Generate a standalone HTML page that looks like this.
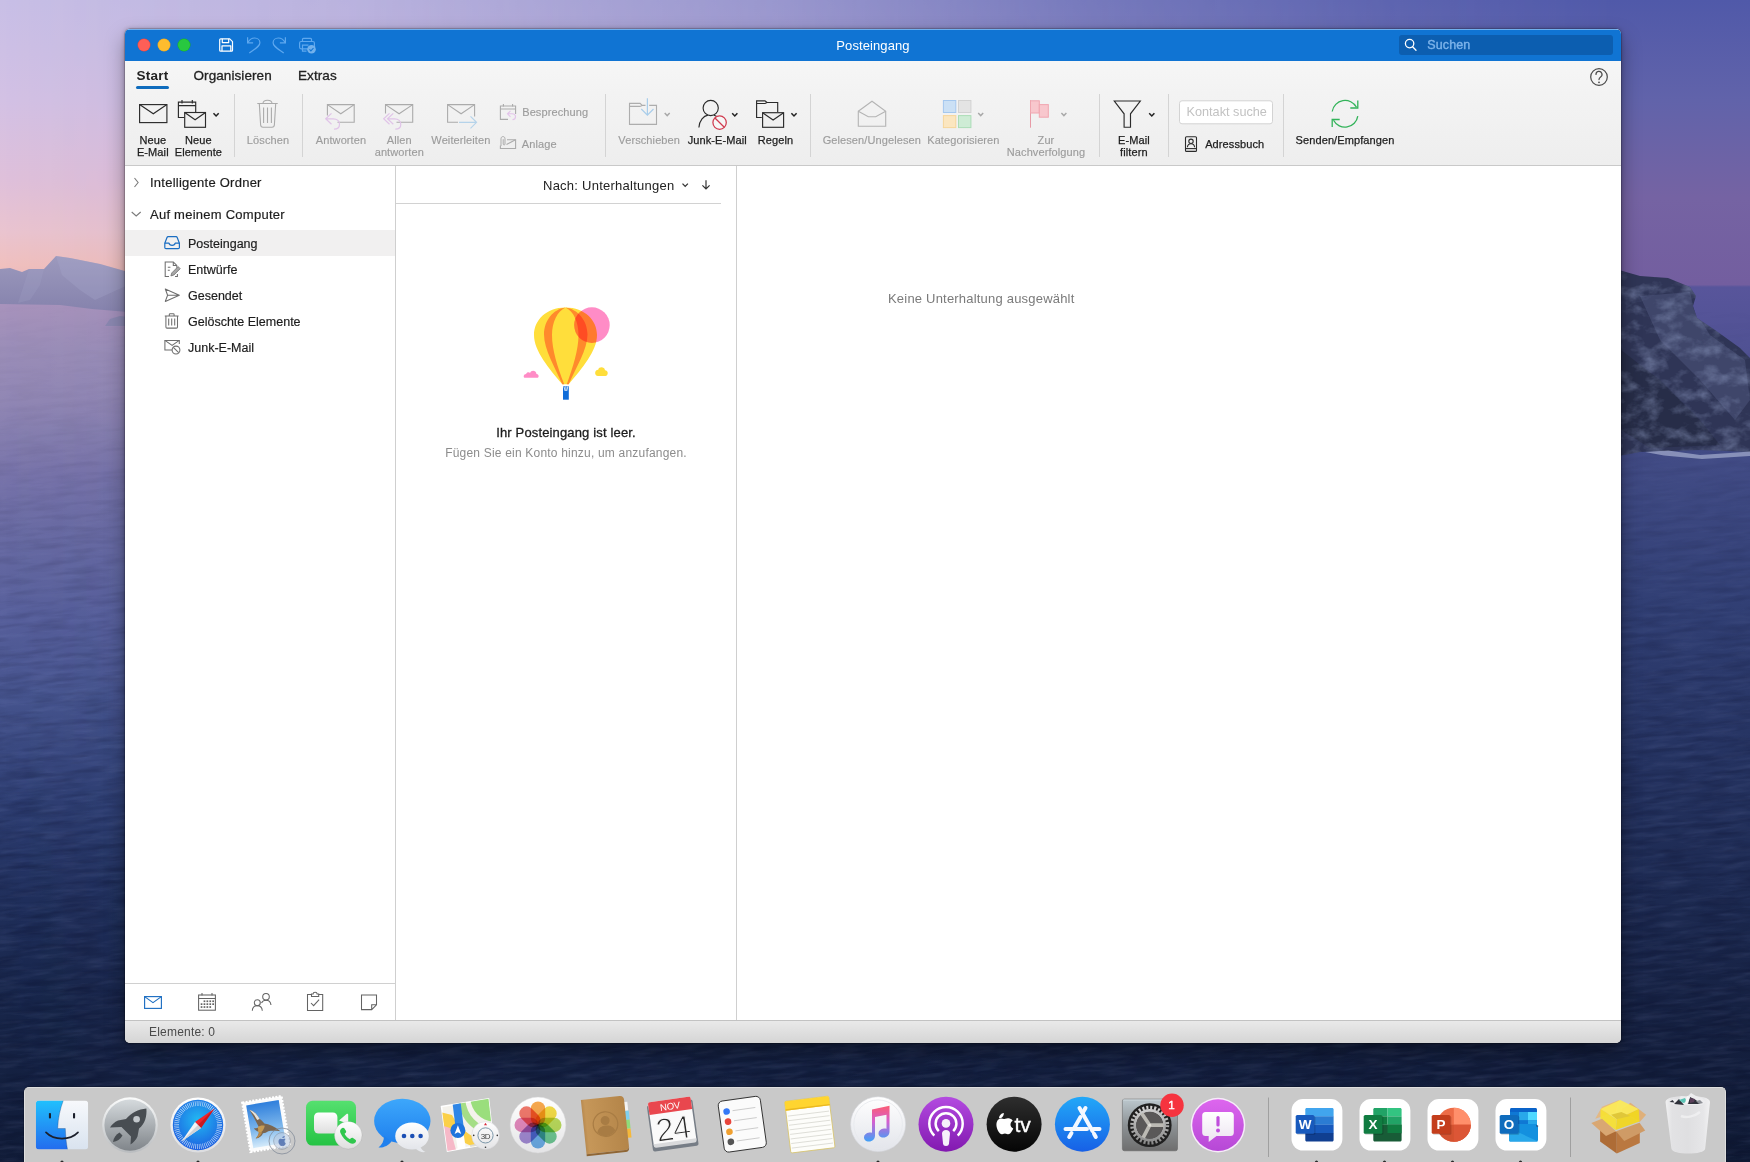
<!DOCTYPE html>
<html><head><meta charset="utf-8">
<style>
*{box-sizing:border-box;margin:0;padding:0}
html,body{width:1750px;height:1162px;overflow:hidden;background:#1a2450}
body{position:relative;font-family:"Liberation Sans",sans-serif;color:#1f1f1f;-webkit-font-smoothing:antialiased}
.abs{position:absolute}
#wall{position:absolute;left:0;top:0}
#win{position:absolute;left:125px;top:29px;width:1496px;height:1014px;border-radius:5px;background:#fff;overflow:hidden;box-shadow:0 0 0 .5px rgba(0,0,0,.3),0 9px 20px rgba(0,0,0,.36),0 0 4px rgba(0,0,0,.3)}
#title{position:absolute;left:0;top:0;width:100%;height:31.5px;background:#1074d3;border-top:1px solid #6fb0ee}
#title .t{position:absolute;left:0;right:0;top:7.6px;text-align:center;color:#fff;font-size:13px;letter-spacing:.1px}
.tl{position:absolute;top:8.6px;width:12px;height:12px;border-radius:50%}
#search{position:absolute;left:1274px;top:5px;width:214px;height:20px;border-radius:3px;background:#0c5eb0}
#search span{position:absolute;left:28.3px;top:2.5px;font-size:12.5px;color:#7cb3ea;-webkit-text-stroke:.4px #7cb3ea;letter-spacing:.1px}
#ribbon{position:absolute;left:0;top:31.5px;width:100%;height:105px;background:linear-gradient(#f6f6f6,#f3f3f3 30%,#eeeeee);border-bottom:1px solid #c9c9c9}
.tab{position:absolute;top:8px;font-size:13.5px;color:#222;letter-spacing:.08px;-webkit-text-stroke:.3px #222}
.rl{position:absolute;letter-spacing:.1px;font-size:11px;line-height:12px;text-align:center;white-space:nowrap;color:#1d1d1d;transform:translateX(-50%);-webkit-text-stroke:.25px currentColor}
.rl.d{color:#9c9c9c;-webkit-text-stroke:.15px currentColor}
.sep{position:absolute;top:65px;width:1px;height:63px;background:#d6d6d6}
#side{position:absolute;left:0;top:137px;width:270.5px;height:854px;background:#fff;border-right:1px solid #cfcfcf}
#list{position:absolute;left:271px;top:137px;width:340.5px;height:854px;border-right:1px solid #cfcfcf;background:#fff}
#status{position:absolute;left:0;top:991px;width:100%;height:23px;background:linear-gradient(#e9e9e9,#d5d5d5);border-top:1px solid #c2c2c2}
#status span{position:absolute;left:24px;top:4px;font-size:12px;color:#4a4a4a;letter-spacing:.2px}
.fi{position:absolute;left:63px;font-size:12.5px;color:#1d1d1d;white-space:nowrap;-webkit-text-stroke:.18px #1d1d1d}
.fh{position:absolute;left:25px;font-size:13px;color:#1d1d1d;white-space:nowrap;letter-spacing:.25px;-webkit-text-stroke:.18px #1d1d1d}
#dock{position:absolute;left:24px;top:1087px;width:1702px;height:80px;border-radius:5px 5px 0 0;background:#c9c9c9;border:1px solid #dedede;border-bottom:none;box-shadow:0 0 0 .5px rgba(0,0,0,.35)}
.pet rect{mix-blend-mode:multiply;opacity:.9}
#dk{isolation:isolate}
#ov,#ov2,#title,#status{will-change:transform}
</style></head>
<body>
<svg id="wall" width="1750" height="1162" viewBox="0 0 1750 1162">
<defs>
<linearGradient id="gL" x1="0" y1="0" x2="0" y2="1162" gradientUnits="userSpaceOnUse">
<stop offset="0" stop-color="#c8bfe6"/><stop offset=".086" stop-color="#d3c1e4"/><stop offset=".155" stop-color="#dfc0da"/><stop offset=".2" stop-color="#eac4cf"/><stop offset=".228" stop-color="#f0c0be"/><stop offset=".25" stop-color="#e9b5bd"/>
<stop offset=".262" stop-color="#a893bc"/><stop offset=".3" stop-color="#9b8eb8"/><stop offset=".345" stop-color="#9187b4"/><stop offset=".41" stop-color="#7773a9"/><stop offset=".47" stop-color="#6669a2"/><stop offset=".53" stop-color="#575f9b"/><stop offset=".6" stop-color="#46548e"/><stop offset=".69" stop-color="#2e3e72"/><stop offset=".775" stop-color="#202f5b"/><stop offset=".86" stop-color="#18264a"/><stop offset="1" stop-color="#111c38"/>
</linearGradient>
<linearGradient id="gR" x1="0" y1="0" x2="0" y2="1162" gradientUnits="userSpaceOnUse">
<stop offset="0" stop-color="#5059a9"/><stop offset=".086" stop-color="#6163aa"/><stop offset=".17" stop-color="#7563a3"/><stop offset=".245" stop-color="#735e9f"/>
<stop offset=".247" stop-color="#58559b"/><stop offset=".4" stop-color="#414b85"/><stop offset=".52" stop-color="#313f74"/><stop offset=".65" stop-color="#253361"/><stop offset=".775" stop-color="#1c2950"/><stop offset=".9" stop-color="#141f3e"/><stop offset="1" stop-color="#0f1a34"/>
</linearGradient>
<linearGradient id="gH" x1="0" y1="0" x2="1750" y2="0" gradientUnits="userSpaceOnUse">
<stop offset="0" stop-color="#fff" stop-opacity="0"/><stop offset=".2" stop-color="#fff" stop-opacity=".12"/><stop offset=".45" stop-color="#fff" stop-opacity=".4"/><stop offset=".62" stop-color="#fff" stop-opacity=".68"/><stop offset=".8" stop-color="#fff" stop-opacity=".9"/><stop offset=".92" stop-color="#fff" stop-opacity="1"/>
</linearGradient>
<linearGradient id="gW" x1="0" y1="300" x2="0" y2="1162" gradientUnits="userSpaceOnUse"><stop offset="0" stop-color="#fff" stop-opacity="0"/><stop offset=".12" stop-color="#fff" stop-opacity=".15"/><stop offset=".5" stop-color="#fff" stop-opacity=".8"/><stop offset="1" stop-color="#fff" stop-opacity="1"/></linearGradient><mask id="mW"><rect y="300" width="1750" height="862" fill="url(#gW)"/></mask>
<mask id="mH"><rect width="1750" height="1162" fill="url(#gH)"/></mask>
<linearGradient id="gM" x1="0" y1="256" x2="0" y2="310" gradientUnits="userSpaceOnUse"><stop offset="0" stop-color="#9c99bd"/><stop offset="1" stop-color="#8683ad"/></linearGradient>
<filter id="waves" x="0" y="0" width="100%" height="100%" color-interpolation-filters="sRGB"><feTurbulence type="fractalNoise" baseFrequency="0.03 0.22" numOctaves="3" seed="7"/><feColorMatrix type="matrix" values="0 0 0 0 .75  0 0 0 0 .8  0 0 0 0 1  1.6 0 0 0 -0.68"/></filter>
<filter id="wavesd" x="0" y="0" width="100%" height="100%" color-interpolation-filters="sRGB"><feTurbulence type="fractalNoise" baseFrequency="0.025 0.18" numOctaves="3" seed="23"/><feColorMatrix type="matrix" values="0 0 0 0 0  0 0 0 0 0  0 0 0 0 .1  1.6 0 0 0 -0.68"/></filter>
<filter id="rock" x="0" y="0" width="100%" height="100%" color-interpolation-filters="sRGB"><feTurbulence type="fractalNoise" baseFrequency="0.05 0.07" numOctaves="4" seed="11"/><feColorMatrix type="matrix" values="0 0 0 0 .55  0 0 0 0 .6  0 0 0 0 .75  2.2 0 0 0 -0.95"/><feComposite in2="SourceGraphic" operator="in"/></filter>
<clipPath id="cliffc"><path d="M1619 270 L1640 276 L1668 278 L1690 287 L1696 296 L1693 306 L1697 318 L1715 330 L1740 348 L1750 358 L1750 452 L1700 450 L1640 452 L1619 456Z"/></clipPath>
</defs>
<rect width="1750" height="1162" fill="url(#gL)"/>
<rect width="1750" height="1162" fill="url(#gR)" mask="url(#mH)"/>
<g mask="url(#mW)"><rect x="-100" y="220" width="1950" height="1060" filter="url(#waves)" opacity=".13" transform="rotate(-5 875 700)"/>
<rect x="-100" y="220" width="1950" height="1060" filter="url(#wavesd)" opacity=".32" transform="rotate(-5 875 700)"/></g>
<path d="M0 269 L10 268 L22 272 L29 269 L44 269 L56 256 L70 258 L100 264 L128 272 L128 312 L92 309 L60 305 L0 304Z" fill="url(#gM)"/>
<path d="M56 256 L70 258 L100 264 L128 272 L128 285 L95 300 L80 290 L62 275Z" fill="#aaa8cc" opacity=".3"/>
<path d="M29 269 L44 269 L40 285 L30 300 L18 303Z" fill="#aaa8cc" opacity=".2"/>
<path d="M105 326 L110 319 L120 316 L128 317 L128 326Z" fill="#8a87b0"/>
<path d="M1619 270 L1640 276 L1668 278 L1690 287 L1696 296 L1693 306 L1697 318 L1715 330 L1740 348 L1750 358 L1750 452 L1700 450 L1640 452 L1619 456Z" fill="#2f3556"/>
<g clip-path="url(#cliffc)"><path d="M1640 296 L1690 292 L1694 310 L1710 335 L1745 360 L1750 400 L1735 420 L1700 380 L1660 340Z" fill="#4f577e" opacity=".5"/>
<path d="M1621 350 L1660 380 L1700 420 L1720 445 L1650 448 L1621 430Z" fill="#23283f" opacity=".6"/>
<rect x="1619" y="268" width="131" height="190" fill="#fff" filter="url(#rock)" opacity=".55"/></g>
<path d="M1645 452 L1668 450.500 L1700 455 L1730 453 L1750 451.500 L1750 456 L1702 459 L1664 455.500Z" fill="#b7bfdc" opacity=".6"/>
</svg>

<div id="win">
 <div id="title">
  <div class="tl" style="left:13px;background:#fe5f57;box-shadow:0 0 0 .5px #e0443e"></div>
  <div class="tl" style="left:33px;background:#febc2e;box-shadow:0 0 0 .5px #dea123"></div>
  <div class="tl" style="left:53px;background:#28c840;box-shadow:0 0 0 .5px #1aab29"></div>
  
  <div class="t">Posteingang</div>
  <div id="search"><span>Suchen</span></div>
 </div>
 <div id="ribbon">
  
 </div>
 <div id="side"></div>
 <div id="list"></div>
 <div id="ov" style="position:absolute;left:-125px;top:-29px;width:1750px;height:1162px;pointer-events:none">
<svg class="abs" style="left:0;top:0" width="1750" height="1162" viewBox="0 0 1750 1162" fill="none" stroke-linecap="butt" stroke-linejoin="miter">
<!-- tabs underline -->
<rect x="136" y="86" width="33" height="3" rx="1.5" fill="#0f6cbd"/>
<!-- help -->
<g stroke="#4a4a4a" stroke-width="1.2"><circle cx="1599" cy="77" r="8.3"/><path d="M1596 74.5a3 3 0 1 1 4.6 2.4c-1.2.8-1.6 1.4-1.6 2.7" stroke-linecap="round"/></g><circle cx="1599" cy="82.3" r=".9" fill="#4a4a4a"/>
<!-- separators -->
<g stroke="#d4d4d4" stroke-width="1"><path d="M234.5 94v63M302.5 94v63M605.5 94v63M810.5 94v63M1099.5 94v63M1168.5 94v63M1283.5 94v63"/></g>
<!-- Neue E-Mail -->
<g stroke="#2b2b2b" stroke-width="1.15"><rect x="139.6" y="104.6" width="27.3" height="18"/><path d="M139.6 104.6l13.7 9.2 13.6-9.2"/></g>
<!-- Neue Elemente -->
<g stroke="#2b2b2b" stroke-width="1.15"><path d="M184.3 117.5h-5.9v-15.4h17.3v10"/><path d="M178.4 105.6h17.3M182 100v3.6M192.3 100v3.6"/><rect x="184.7" y="112.5" width="20.8" height="14.8" fill="#f0f0f0"/><path d="M184.7 112.5l10.4 7.3 10.4-7.3"/></g>
<path d="M213.5 113.2l2.6 2.8 2.6-2.8" stroke="#222" stroke-width="1.5"/>
<!-- Loeschen -->
<g stroke="#ababab" stroke-width="1.1"><path d="M257.3 103.5h20.4M263 103.5c0-2 1.4-3.3 4.5-3.3s4.5 1.3 4.5 3.3"/><path d="M259.3 103.5l1.3 21.3c.1 1.6.9 2.4 2.4 2.4h9c1.500 0 2.300-.8 2.400-2.400l1.300-21.300"/><path d="M263.600 107.500v15.500M267.500 107.500v15.500M271.400 107.500v15.500"/></g>
<!-- Antworten -->
<g stroke="#ababab" stroke-width="1.1"><path d="M337.500 122.200h16.700v-17.600h-26.800v11"/><path d="M327.400 104.600l13.400 9.200 13.400-9.200"/></g>
<path d="M331.500 113.400l-5.800 5.400 5.800 5.400M325.700 118.800h7.500c4.200 0 6.300 2.600 6.300 5.400 0 3.200-2.500 5-5.500 5" stroke="#e0c4e8" stroke-width="1.2"/>
<!-- Allen antworten -->
<g stroke="#ababab" stroke-width="1.1"><path d="M396.500 122.200h16.200v-17.600h-27.200v9"/><path d="M385.500 104.600l13.600 9.200 13.600-9.200"/></g>
<path d="M389.500 113.400l-5.800 5.400 5.800 5.400M393.300 113.400l-5.800 5.400 5.800 5.400M387.500 118.800h7.000c4.200 0 6.300 2.600 6.300 5.400 0 3.200-2.500 5-5.500 5" stroke="#e0c4e8" stroke-width="1.2"/>
<!-- Weiterleiten -->
<g stroke="#ababab" stroke-width="1.1"><path d="M458 122.200h-10.400v-17.600h27v12"/><path d="M447.600 104.600l13.500 9.200 13.500-9.200"/></g>
<path d="M459 122.300h17.500M470.500 116.300l6 6-6 6" stroke="#b5d3ea" stroke-width="1.2"/>
<!-- Besprechung -->
<g stroke="#ababab" stroke-width="1.1"><path d="M508 119.400h-7.600v-13.400h15.200v8"/><path d="M500.400 109h15.200M503.400 104v2.600M512.600 104v2.600"/></g>
<path d="M510.500 110.800l-3 3 3 3M507.500 113.800h4.500c2.200 0 3.500 1.300 3.500 3 0 1.800-1.300 2.800-3 2.800" stroke="#e3c3ea" stroke-width="1.1"/>
<!-- Anlage -->
<g stroke="#ababab" stroke-width="1.1"><path d="M507 139.700h8.600v8.800h-15.200v-3"/><path d="M506.500 144.500l9-4.700"/><path d="M501 146v-7.200c0-1.400.8-2.200 2-2.200s2 .8 2 2.200v5.200c0 .6-.4 1-.9 1s-.9-.4-.9-1v-4.800" stroke-width="1"/></g>
<!-- Verschieben -->
<g stroke="#adadad" stroke-width="1.1"><path d="M645.500 105.400h-3.300l-2.100-2h-10.600v21h27v-19h-7.300"/><path d="M629.500 106.400h10.400l2.300-1"/></g>
<path d="M647.400 98.200v16.600M641.300 109l6.100 6.100 6.100-6.100" stroke="#a9cdea" stroke-width="1.2"/>
<path d="M664.700 112.900l2.500 2.700 2.500-2.700" stroke="#a8a8a8" stroke-width="1.4"/>
<!-- Junk -->
<g stroke="#2b2b2b" stroke-width="1.15"><circle cx="710.700" cy="108" r="7.600"/><path d="M698.900 127.500c.5-7.500 4.800-11.600 9-12.400M714 115.300c.9.200 1.800.6 2.600 1.100"/></g>
<g stroke="#d03a4e" stroke-width="1.25"><circle cx="719.600" cy="122.600" r="6.700" fill="#f6f6f6"/><path d="M714.700 117.700l9.600 9.600"/></g>
<path d="M732.200 113.200l2.600 2.800 2.600-2.800" stroke="#222" stroke-width="1.5"/>
<!-- Regeln -->
<g stroke="#2b2b2b" stroke-width="1.15"><path d="M761.800 117.500h-5.200v-16.700h8.400l2 1.700h10.700v9.500"/><path d="M756.600 103.500h8.400l2-1"/><rect x="762.600" y="112.700" width="21" height="14.600" fill="#f0f0f0"/><path d="M762.600 112.700l10.500 7.300 10.500-7.300"/></g>
<path d="M791.400 113.200l2.600 2.800 2.600-2.800" stroke="#222" stroke-width="1.5"/>
<!-- Gelesen -->
<g stroke="#b4b4b4" stroke-width="1.1"><path d="M858.300 111.300l13.700-10 13.700 10v15h-27.400z"/><path d="M858.300 111.300l10 5.500h7.400l10-5.500"/></g>
<!-- Kategorisieren -->
<rect x="943.400" y="100.500" width="12.400" height="12" fill="#cbe0f5" stroke="#a4c7ee"/><rect x="958.500" y="100.500" width="12.400" height="12" fill="#e4e4e4" stroke="#d2d2d2"/><rect x="943.400" y="115.600" width="12.400" height="12" fill="#fbe6c0" stroke="#f6d59b"/><rect x="958.500" y="115.600" width="12.400" height="12" fill="#ceecd5" stroke="#abdcb6"/>
<path d="M978.200 112.900l2.500 2.700 2.500-2.700" stroke="#a8a8a8" stroke-width="1.400"/>
<!-- Flag -->
<path d="M1030.500 100.300v27.400" stroke="#e79aa6" stroke-width="1"/><rect x="1030.500" y="100.800" width="8.800" height="12.200" fill="#f8c7cd" stroke="#f0a6b0"/><rect x="1039.300" y="104.600" width="9" height="12.600" fill="#f8c7cd" stroke="#f0a6b0"/>
<path d="M1061.400 112.900l2.500 2.700 2.500-2.700" stroke="#a8a8a8" stroke-width="1.400"/>
<!-- Filter -->
<path d="M1114.300 101h26l-9.800 12.800v13.400h-6.400v-13.400z" stroke="#2b2b2b" stroke-width="1.150"/>
<path d="M1149.200 113.200l2.600 2.800 2.600-2.800" stroke="#222" stroke-width="1.500"/>
<!-- Kontakt suche box -->
<rect x="1179.500" y="100.800" width="93" height="23" rx="2.500" fill="#fff" stroke="#d3d3d3"/>
<!-- Adressbuch -->
<g stroke="#2b2b2b" stroke-width="1.100"><rect x="1185.500" y="136.800" width="11" height="14.600" rx="1"/><path d="M1185.500 148.600h11"/><circle cx="1191" cy="141.300" r="2.200"/><path d="M1187.400 147.300c.2-2.400 1.700-3.500 3.600-3.500s3.400 1.100 3.600 3.500"/></g>
<!-- Sync -->
<g stroke="#33b35a" stroke-width="1.300"><path d="M1332.200 111.500a13 13 0 0 1 24.300-4.200"/><path d="M1357.800 116.100a13 13 0 0 1 -24.300 4.200"/><path d="M1357.800 100.500v7.500h-7.500M1332.200 127v-7.500h7.500"/></g>
</svg>
<div class="tab" style="left:136.500px;top:67.500px;font-weight:bold;font-size:13.500px;letter-spacing:.25px;-webkit-text-stroke:0">Start</div>
<div class="tab" style="left:193.500px;top:67.500px">Organisieren</div>
<div class="tab" style="left:298px;top:67.500px">Extras</div>
<div class="rl" style="left:152.800px;top:133.700px">Neue<br>E-Mail</div>
<div class="rl" style="left:198.400px;top:133.700px">Neue<br>Elemente</div>
<div class="rl d" style="left:268px;top:133.700px">Löschen</div>
<div class="rl d" style="left:341px;top:133.700px">Antworten</div>
<div class="rl d" style="left:399.300px;top:133.700px">Allen<br>antworten</div>
<div class="rl d" style="left:460.900px;top:133.700px">Weiterleiten</div>
<div class="rl d" style="left:555.200px;top:105.900px">Besprechung</div>
<div class="rl d" style="left:539.200px;top:137.900px">Anlage</div>
<div class="rl d" style="left:649.200px;top:133.700px">Verschieben</div>
<div class="rl" style="left:717.300px;top:133.700px">Junk-E-Mail</div>
<div class="rl" style="left:775.500px;top:133.700px">Regeln</div>
<div class="rl d" style="left:871.800px;top:133.700px">Gelesen/Ungelesen</div>
<div class="rl d" style="left:963.400px;top:133.700px">Kategorisieren</div>
<div class="rl d" style="left:1046px;top:133.700px">Zur<br>Nachverfolgung</div>
<div class="rl" style="left:1133.900px;top:133.700px">E-Mail<br>filtern</div>
<div class="rl" style="left:1234.700px;top:138.300px">Adressbuch</div>
<div class="rl" style="left:1345px;top:133.700px">Senden/Empfangen</div>
<div class="abs" style="left:1186.500px;top:104.600px;font-size:12.700px;color:#c2c2c2;white-space:nowrap">Kontakt suche</div>
</div>

<div id="ov2" style="position:absolute;left:-125px;top:-29px;width:1750px;height:1162px;pointer-events:none">
<div class="abs" style="left:125px;top:230px;width:270.200px;height:25.700px;background:#f1f0f0"></div>
<svg class="abs" style="left:0;top:0" width="1750" height="1162" viewBox="0 0 1750 1162" fill="none">
<!-- QAT -->
<g stroke="#fff" stroke-width="1.200" stroke-linejoin="round"><path d="M219.700 39.800c0-.6.400-1 1-1h9l2.800 2.800v8.600c0 .6-.4 1-1 1h-10.800c-.6 0-1-.4-1-1z"/><path d="M222.300 38.800v3.800h6.400v-3.800M222 51.200v-5.400h8.800v5.400"/></g>
<g stroke="#5ea8ef" stroke-width="1.200"><path d="M247.600 37.300v5.500h5.500"/><path d="M247.800 42.600c1.500-2.800 4-4.600 6.900-4.600 3 0 5.200 2 5.200 4.800 0 3.300-3.600 5.200-10.600 10.300"/></g>
<g stroke="#5ea8ef" stroke-width="1.200"><path d="M285.400 37.300v5.500h-5.500"/><path d="M285.200 42.600c-1.500-2.800-4-4.600-6.900-4.600-3 0-5.200 2-5.200 4.800 0 3.300 3.600 5.200 10.600 10.300"/></g>
<g stroke="#5ea8ef" stroke-width="1.200"><path d="M302.500 41.500v-2.200c0-.6.400-1 1-1h7c.6 0 1 .4 1 1v2.200"/><rect x="299.600" y="41.500" width="14.800" height="7.300" rx="1.500"/><path d="M302.500 48v-2.800h6M302.500 48v3.200h4"/></g>
<circle cx="311.500" cy="49.300" r="4.300" fill="#72b1ec"/><path d="M309.500 49.400l1.400 1.500 2.600-2.900" stroke="#1074d3" stroke-width="1.100"/>
<!-- magnifier -->
<g stroke="#fff" stroke-width="1.300"><circle cx="1409.600" cy="43.600" r="4.200"/><path d="M1412.600 46.800l3.400 3.400" stroke-linecap="round"/></g>
<!-- sidebar chevrons -->
<path d="M134.500 178l3.600 4.500-3.600 4.500" stroke="#7a7a7a" stroke-width="1.100"/>
<path d="M131.700 212l4.500 4 4.500-4" stroke="#7a7a7a" stroke-width="1.100"/>
<!-- Posteingang icon -->
<g stroke="#1b6ec2" stroke-width="1.200" stroke-linejoin="round"><path d="M164.800 243.200l2.200-5.700c.2-.5.600-.8 1.100-.8h8c.5 0 .9.300 1.100.8l2.200 5.700v4.300c0 .7-.5 1.200-1.200 1.200h-12.200c-.7 0-1.200-.5-1.200-1.200z"/><path d="M164.800 243.200h4.200c.3 1.400 1.400 2.200 3.100 2.200s2.800-.8 3.100-2.200h4.200"/></g>
<!-- Entwuerfe -->
<g stroke="#6e6e6e" stroke-width="1.050"><path d="M169 276.400h-3.800v-14.400h8.100l3.500 3.500v2.300"/><path d="M173.300 262v3.500h3.500M167.800 267.200h2.600M167.800 270.300h2"/><path d="M175 276.400h2.400v-2.300"/><path d="M170.900 275.900l.9-3 6.300-6.300 2.100 2.100-6.300 6.300z" stroke-width=".8" fill="#a8a8a8"/></g>
<!-- Gesendet -->
<path d="M165.300 289l14 6.200-14 6.200 2.300-6.200zM167.600 295.200h11.700" stroke="#6e6e6e" stroke-width="1.050" stroke-linejoin="round"/>
<!-- Geloeschte -->
<g stroke="#6e6e6e" stroke-width="1.050"><path d="M164.800 316h13.800M169.300 316v-1.400c0-.5.300-.8.800-.8h3.200c.5 0 .8.300.8.800v1.400"/><path d="M165.900 316v11c0 .700.400 1.100 1.100 1.100h9.400c.700 0 1.100-.4 1.100-1.100v-11"/><path d="M168.700 318.500v7M171.700 318.500v7M174.700 318.500v7"/></g>
<!-- Junk icon -->
<g stroke="#6e6e6e" stroke-width="1.050"><path d="M172.500 350h-7.600v-9.600h14.400v3.500"/><path d="M164.900 340.400l7.200 5 7.200-5"/><circle cx="176" cy="350" r="3.900" fill="#fff"/><path d="M173.300 347.300l5.400 5.400"/></g>
<!-- list header -->
<path d="M396 203.500h325" stroke="#d2d2d2"/>
<path d="M682.500 183.600l2.700 2.800 2.700-2.800" stroke="#333" stroke-width="1.300"/>
<path d="M706 180.200v8.600M702.400 185.400l3.600 3.600 3.600-3.600" stroke="#333" stroke-width="1.200"/>
<!-- nav top border -->
<path d="M125 983.500h270.500" stroke="#d0d0d0"/>
<!-- nav icons -->
<g stroke="#1e6fc2" stroke-width="1.150"><rect x="144.600" y="996.600" width="16.800" height="11.800"/><path d="M144.600 996.600l8.400 6 8.400-6"/></g>
<g stroke="#636363" stroke-width="1.050"><rect x="198.600" y="995" width="16.800" height="15.200"/><path d="M198.600 998.500h16.800M202 993v2.500M212 993v2.500"/></g>
<g fill="#636363"><rect x="203.6" y="1000.4" width="1.700" height="1.700"/><rect x="206.5" y="1000.4" width="1.700" height="1.700"/><rect x="209.4" y="1000.4" width="1.700" height="1.700"/><rect x="212.3" y="1000.4" width="1.700" height="1.700"/><rect x="200.7" y="1003.3" width="1.700" height="1.700"/><rect x="203.6" y="1003.3" width="1.700" height="1.700"/><rect x="206.5" y="1003.3" width="1.700" height="1.700"/><rect x="209.4" y="1003.3" width="1.700" height="1.700"/><rect x="212.3" y="1003.3" width="1.700" height="1.700"/><rect x="200.7" y="1006.2" width="1.700" height="1.700"/><rect x="203.6" y="1006.2" width="1.700" height="1.700"/><rect x="206.5" y="1006.2" width="1.700" height="1.700"/><rect x="209.4" y="1006.2" width="1.700" height="1.700"/></g>
<g stroke="#636363" stroke-width="1.050"><circle cx="266" cy="996.800" r="3.300"/><path d="M261.500 1003c.8-1.600 2.400-2.700 4.500-2.700 2.900 0 4.700 2 5 4.700"/><circle cx="257.300" cy="1002.800" r="3"/><path d="M252.300 1010.700c.2-3.100 2.200-5 5-5s4.800 1.900 5 5"/></g>
<g stroke="#636363" stroke-width="1.050"><path d="M311.500 994.500h-4v16h15.200v-16h-4"/><path d="M311.500 996.500v-2.500h1.600c0-1.100.8-1.800 2-1.800s2 .7 2 1.800h1.600v2.500z"/><path d="M311 1003l2.600 2.700 5.500-6"/></g>
<path d="M361.500 995h15v9.800l-4.800 4.800h-10.200zM376.500 1004.800h-4.800v4.800" stroke="#636363" stroke-width="1.050"/>
</svg>
<div class="fh" style="left:150px;top:174.700px">Intelligente Ordner</div>
<div class="fh" style="left:150px;top:206.600px">Auf meinem Computer</div>
<div class="fi" style="left:188px;top:237.100px">Posteingang</div>
<div class="fi" style="left:188px;top:263.100px">Entwürfe</div>
<div class="fi" style="left:188px;top:289.100px">Gesendet</div>
<div class="fi" style="left:188px;top:315.100px">Gelöschte Elemente</div>
<div class="fi" style="left:188px;top:341.100px">Junk-E-Mail</div>
<div class="abs" id="nach" style="left:543px;top:177.500px;font-size:13px;white-space:nowrap;color:#222;letter-spacing:.25px">Nach: Unterhaltungen</div>
<div class="abs" id="e1" style="left:396px;width:340px;top:424.500px;text-align:center;font-size:13px;color:#1d1d1d;-webkit-text-stroke:.3px #1d1d1d;letter-spacing:.15px">Ihr Posteingang ist leer.</div>
<div class="abs" id="e2" style="left:396px;width:340px;top:445.500px;text-align:center;font-size:12px;color:#8c8c8c;letter-spacing:.2px">Fügen Sie ein Konto hinzu, um anzufangen.</div>
<div class="abs" id="keine" style="left:888px;top:290.500px;font-size:13px;color:#7a7a7a;white-space:nowrap;letter-spacing:.2px">Keine Unterhaltung ausgewählt</div>
<svg class="abs" style="left:500px;top:290px;isolation:isolate" width="140" height="120" viewBox="500 290 140 120">
<path d="M565.500 307.500C546 307.500 534 320.500 534 335c0 16 15 33.500 28.300 49.200h6.400C582 368.500 597 351 597 335c0-14.500-12-27.500-31.500-27.500z" fill="#ffde3b"/>
<path d="M565.500 307.500c-12 1.500-21.500 13-21.500 27 0 15 11 33 18.300 49.700h1.900C557.500 367 552 350 552 335c0-13 5.500-24 13.500-27.500z" fill="#ff8a2c"/>
<path d="M565.500 307.500c12 1.500 22 13 22 27 0 15-11.500 33-18.800 49.700h-1.900C573 367 578.500 350 578.500 335c0-13-5-24-13-27.500z" fill="#ff8a2c"/>
<circle cx="591.900" cy="325.100" r="17.800" fill="#ff8cc6" style="mix-blend-mode:multiply"/>
<rect x="563" y="386" width="5.800" height="13.700" fill="#0f6cd9"/>
<path d="M563.800 386l1.300 5M568 386l-1.300 5M565.900 386v5" stroke="#fff" stroke-width=".8" fill="none"/>
<path d="M524.500 377.800c-1.200-.6-1.200-3.600 1.600-3.800.6-2.200 3.300-2.200 4-.9.800-3.400 5.900-3.200 6.400.8 2.600.2 2.600 3.400 1.200 3.900z" fill="#ff8cc6"/>
<path d="M598 376c-3.800-.2-3.800-6 .2-6.300.8-3.200 6.300-3.200 6.800.5 3.600.3 3.600 5.300.4 5.800z" fill="#ffde3b"/>
</svg>

</div>

 <div id="status"><span>Elemente: 0</span></div>
</div>
<div id="dock"></div>
<svg class="abs" id="dk" style="left:0;top:1080px" width="1750" height="82" viewBox="0 1080 1750 82">
<defs>
<linearGradient id="fb" x1="0" y1="0" x2="0" y2="1"><stop offset="0" stop-color="#20c0fd"/><stop offset="1" stop-color="#236cee"/></linearGradient>
<linearGradient id="fw" x1="0" y1="0" x2="0" y2="1"><stop offset="0" stop-color="#f7f9fc"/><stop offset="1" stop-color="#d9e3ef"/></linearGradient>
<clipPath id="fc"><rect x="35.800" y="1100.500" width="52.400" height="49" rx="3.500"/></clipPath>
<linearGradient id="lp" x1="0" y1="0" x2="0" y2="1"><stop offset="0" stop-color="#d5dadd"/><stop offset="1" stop-color="#80858a"/></linearGradient>
<linearGradient id="lpr" x1="0" y1="0" x2="0" y2="1"><stop offset="0" stop-color="#fafbfb"/><stop offset="1" stop-color="#b9bcbf"/></linearGradient>
<radialGradient id="sf" cx=".5" cy=".4" r=".6"><stop offset="0" stop-color="#22b9f2"/><stop offset="1" stop-color="#1c5fe0"/></radialGradient>
<linearGradient id="sfr" x1="0" y1="0" x2="0" y2="1"><stop offset="0" stop-color="#ffffff"/><stop offset="1" stop-color="#dcdde0"/></linearGradient>
<linearGradient id="msky" x1="0" y1="0" x2="0" y2="1"><stop offset="0" stop-color="#2f7fdc"/><stop offset=".6" stop-color="#7db7ec"/><stop offset="1" stop-color="#d4eafa"/></linearGradient>
<linearGradient id="ft" x1="0" y1="0" x2="0" y2="1"><stop offset="0" stop-color="#55e06f"/><stop offset="1" stop-color="#25c344"/></linearGradient>
<linearGradient id="ftw" x1="0" y1="0" x2="0" y2="1"><stop offset="0" stop-color="#ffffff"/><stop offset="1" stop-color="#dedede"/></linearGradient>
<linearGradient id="msg" x1="0" y1="0" x2="0" y2="1"><stop offset="0" stop-color="#3da7fb"/><stop offset="1" stop-color="#1f80ee"/></linearGradient>
<linearGradient id="msw" x1="0" y1="0" x2="0" y2="1"><stop offset="0" stop-color="#ffffff"/><stop offset="1" stop-color="#e3e5ea"/></linearGradient>
<clipPath id="mapc"><path d="M441.500 1106.500l47-7.700 5 44-46 8.200z"/></clipPath>
<linearGradient id="phw" x1="0" y1="0" x2="0" y2="1"><stop offset="0" stop-color="#ffffff"/><stop offset="1" stop-color="#e4e4e6"/></linearGradient>
</defs>
<!-- indicator dots -->
<g fill="#2a2a2a"><circle cx="62" cy="1162" r="1.600"/><circle cx="198" cy="1162" r="1.600"/><circle cx="402" cy="1162" r="1.600"/><circle cx="878" cy="1162" r="1.600"/><circle cx="1316.500" cy="1162" r="1.600"/><circle cx="1384.500" cy="1162" r="1.600"/><circle cx="1452.500" cy="1162" r="1.600"/><circle cx="1520.500" cy="1162" r="1.600"/></g>
<!-- Finder -->
<g clip-path="url(#fc)"><rect x="35.800" y="1100.500" width="52.400" height="49" fill="url(#fw)"/>
<path d="M35.800 1100.500h27.500c-3 8-5.300 17.500-5.600 28h7.600c.3 8 1 15 2.200 21h-31.700z" fill="url(#fb)"/>
<path d="M63.300 1100.500c-3 8-5.300 17.500-5.600 28h7.600c.3 8 1 15 2.200 21" fill="none" stroke="#1d3f7a" stroke-width=".6" opacity=".55"/>
<path d="M46 1132.300c8 8.300 24 8.300 32 0" fill="none" stroke="#1b1f2b" stroke-width="1.700" stroke-linecap="round"/>
<rect x="48.900" y="1112.900" width="2.100" height="5.500" rx=".9" fill="#1b1f2b"/><rect x="73" y="1112.900" width="2.100" height="5.500" rx=".9" fill="#1b1f2b"/></g>
<!-- Launchpad -->
<circle cx="130" cy="1125.100" r="27.800" fill="url(#lpr)"/><circle cx="130" cy="1125.100" r="25.600" fill="url(#lp)"/>
<path d="M146.400 1108.400c-8 .6-15.500 4.600-20.400 10.600l-8 1.500c-3.500 1.500-6 4-8 7l11.500-.5 9.500 9.500-.5 8c3-2 5.500-4.500 7-8l1.500-8c6-4.900 8-12.100 7.400-20.100z" fill="#484d52"/>
<path d="M119.500 1132.500c-3.500 2-6 5.500-6.500 9.500 4-.5 7.500-3 9.500-6.500z" fill="#484d52"/>
<circle cx="136.600" cy="1119.300" r="3.300" fill="#c3c8cc"/>
<!-- Safari -->
<circle cx="198" cy="1125" r="27.600" fill="url(#sfr)"/><circle cx="198" cy="1125" r="25.200" fill="url(#sf)"/>
<circle cx="198" cy="1125" r="21.500" fill="none" stroke="#fff" stroke-width="5" stroke-dasharray=".7 1.176" opacity=".7"/>
<path d="M214.500 1108.500l-19.500 13.500 6 6z" fill="#f0252c"/><path d="M181.500 1141.500l19.500-13.500-6-6z" fill="#f3f3f3"/>
<path d="M214.500 1108.500l-16.500 16.500 3 3z" fill="#c81a20"/><path d="M181.500 1141.500l16.500-16.500 3 3z" fill="#cfd2d6"/>
<!-- Mail -->
<g transform="rotate(-9.500 266 1124)"><rect x="246.200" y="1099.100" width="39.600" height="49.900" fill="#fbfbfb" stroke="#fff" stroke-width="2.400" stroke-dasharray="2 1.350"/><rect x="249.500" y="1102.400" width="33" height="43.300" fill="url(#msky)"/>
<path d="M252 1107.500c3.500 1 6.500 5 8.500 10.500 1.500 1.200 3 3.200 4 5.300 4.500 1 9.500 4.500 14.500 10.200-4.500-1.200-8.500-2-12-2-1.800 1-3.800 1.300-5.500 1-1.500 2.700-4.500 4.200-8 4 2.200-1.700 3.800-3.700 4.300-6-2.500-1-4-2.500-4.300-4.500 1.800.700 3.500.700 5 0-2-6.500-4-12.500-6.500-18.500z" fill="#7b6650"/>
<path d="M252 1107.500c3.500 1 6.500 5 8.500 10.500l-2.500.5c-1.500-4.200-3.500-8-6-11z" fill="#e6e2da"/><path d="M257 1126c2-1.500 5.500-1.500 7.500-.5-1 2.500-2.500 4.500-4 5.500-1.500.5-3 .3-4-.5 1-1.300 1.200-3 .5-4.500z" fill="#c59a55"/><path d="M253.500 1136.500c2.200-1.700 3.800-3.700 4.300-6l3 1c-1.500 2.700-3.800 4.700-7.300 5z" fill="#b8894a"/></g>
<g fill="none" stroke="#7f8896" opacity=".75"><circle cx="282" cy="1141" r="13" stroke-width="1"/><circle cx="282" cy="1141" r="8.300" stroke-width=".8"/></g><circle cx="282" cy="1141" r="8" fill="#b7c6de" opacity=".55"/>
<path d="M282 1137.500c1-1.500 2.500-1.500 3-1-.5 1-1.500 2-3 1zm-2.500 1.500c1.500-.8 2.500 0 3 0s1.700-.8 3 0c-1.500 1.500-1.300 3.500.3 4.500-.8 2-2 3-3.300 2.300-1.200.7-2.500 0-3.500-2-.8-1.800-.7-3.800.5-4.800z" fill="#4f6fae" opacity=".85"/>
<!-- FaceTime -->
<rect x="306" y="1100.800" width="50" height="44.800" rx="6.500" fill="url(#ft)"/>
<rect x="314" y="1112.400" width="23.400" height="21.200" rx="4.500" fill="url(#ftw)"/><path d="M339 1120.500l7.500-6.500c.8-.7 1.700-.3 1.700.8v9z" fill="#f4f4f4"/>
<circle cx="348.200" cy="1135.200" r="13.800" fill="url(#ftw)"/><circle cx="348.200" cy="1135.200" r="13.800" fill="none" stroke="#000" stroke-opacity=".08"/>
<path d="M341.500 1128.500c.8-1 2-1.200 2.800-.2l1.600 2.400c.5.800.3 1.600-.4 2.200l-.9.800c1.200 2.400 3 4.300 5.400 5.600l.8-1c.6-.7 1.500-.8 2.200-.3l2.400 1.700c.9.700.8 1.900 0 2.700-1.600 1.500-3.600 1.600-5.600.6-4.300-2.200-7.500-5.700-9.300-10-.8-1.900-.4-3.400 1-4.500z" fill="#2fc74d"/>
<!-- Messages -->
<ellipse cx="402.300" cy="1121" rx="28.200" ry="22.200" fill="url(#msg)"/><path d="M384 1136c0 5-2 9-5.500 11.500 5 .5 10-2 13-6z" fill="#1f80ee"/>
<ellipse cx="412" cy="1136" rx="16.800" ry="13.600" fill="url(#msw)"/><path d="M420 1146c1 3 3 5 5.500 6-3.500.5-7-.5-9.500-3z" fill="#e6e8ec"/>
<g fill="#1c4fb4"><circle cx="404" cy="1136" r="2.300"/><circle cx="412.300" cy="1136" r="2.300"/><circle cx="420.600" cy="1136" r="2.300"/></g>
<!-- Maps -->
<path d="M441.500 1106.500l47-7.700 5 44-46 8.200z" fill="#f4f2ec" stroke="#fff" stroke-width="1.500"/>
<g clip-path="url(#mapc)"><path d="M470 1098c2 14 10 22 24 24v-26z" fill="#9ade7c"/><path d="M458 1100c3 20 14 32 36 36v-7c-17-3-27-13-29-30z" fill="#a5de86"/><path d="M440 1112l12 3c6 12 18 22 32 26l-2 8c-20-5-33-14-42-28z" fill="#fbd048"/><path d="M441 1125l9 3 6 22-10 2z" fill="#f6b9c8"/><path d="M452.500 1103l8-1.300 3.500 28-8 1.300z" fill="#2f86e6"/><path d="M455 1131l8-1.300 3 20-8 1.400z" fill="#fff"/><path d="M470 1145l8-1.500 1 8-8 1.500z" fill="#dcdad2"/></g>
<circle cx="457.900" cy="1130.400" r="7.500" fill="#1f74dd"/><path d="M457.900 1125.300l3.300 8.800-3.300-1.900-3.300 1.900z" fill="#fff"/>
<circle cx="485.500" cy="1135.400" r="13.800" fill="url(#phw)" stroke="#d5d5d8" stroke-width=".5"/><circle cx="485.500" cy="1135.400" r="7.600" fill="none" stroke="#5d7f95" stroke-width=".8"/>
<path d="M485.500 1122.800l1.500 2.400h-3z" fill="#d9283a"/><g fill="#333"><circle cx="485.500" cy="1147.200" r=".8"/><circle cx="473.700" cy="1135.400" r=".8"/><circle cx="497.300" cy="1135.400" r=".8"/></g>
<text x="485.500" y="1138.500" font-family="Liberation Sans, sans-serif" font-size="8" text-anchor="middle" fill="#444" letter-spacing="-.4">3D</text>
<!-- Photos -->
<circle cx="538" cy="1125" r="27.900" fill="url(#phw)" stroke="#d8d8da" stroke-width=".5"/>
<g class="pet">
<rect x="530.800" y="1101.500" width="14.400" height="24" rx="7.200" fill="#f8a03a"/>
<rect x="530.800" y="1101.500" width="14.400" height="24" rx="7.200" fill="#f2d732" transform="rotate(45 538 1125)"/>
<rect x="530.800" y="1101.500" width="14.400" height="24" rx="7.200" fill="#b4d94a" transform="rotate(90 538 1125)"/>
<rect x="530.800" y="1101.500" width="14.400" height="24" rx="7.200" fill="#5fc48a" transform="rotate(135 538 1125)"/>
<rect x="530.800" y="1101.500" width="14.400" height="24" rx="7.200" fill="#5ea8e8" transform="rotate(180 538 1125)"/>
<rect x="530.800" y="1101.500" width="14.400" height="24" rx="7.200" fill="#9a80d2" transform="rotate(225 538 1125)"/>
<rect x="530.800" y="1101.500" width="14.400" height="24" rx="7.200" fill="#e27db7" transform="rotate(270 538 1125)"/>
<rect x="530.800" y="1101.500" width="14.400" height="24" rx="7.200" fill="#f06a5c" transform="rotate(315 538 1125)"/>
</g>
<defs>
<linearGradient id="ct" x1="0" y1="0" x2="1" y2="0"><stop offset="0" stop-color="#b88a50"/><stop offset=".08" stop-color="#c69759"/><stop offset="1" stop-color="#b48549"/></linearGradient>
<linearGradient id="mu" x1="0" y1="0" x2="0" y2="1"><stop offset="0" stop-color="#fb5c74"/><stop offset=".45" stop-color="#d45fd0"/><stop offset="1" stop-color="#3fa0f7"/></linearGradient>
<linearGradient id="muw" x1="0" y1="0" x2="0" y2="1"><stop offset="0" stop-color="#ffffff"/><stop offset="1" stop-color="#e2e4ea"/></linearGradient>
<linearGradient id="pc" x1="0" y1="0" x2="0" y2="1"><stop offset="0" stop-color="#b34be0"/><stop offset="1" stop-color="#8219b0"/></linearGradient>
<linearGradient id="tv" x1="0" y1="0" x2="0" y2="1"><stop offset="0" stop-color="#2e2e2e"/><stop offset="1" stop-color="#050505"/></linearGradient>
<linearGradient id="as" x1="0" y1="0" x2="0" y2="1"><stop offset="0" stop-color="#22a8f8"/><stop offset="1" stop-color="#1760e6"/></linearGradient>
<linearGradient id="sp" x1="0" y1="0" x2="0" y2="1"><stop offset="0" stop-color="#bcc8ce"/><stop offset=".5" stop-color="#8d9295"/><stop offset="1" stop-color="#6e6e6e"/></linearGradient>
<linearGradient id="gear" x1="0" y1="1105" x2="0" y2="1146" gradientUnits="userSpaceOnUse"><stop offset="0" stop-color="#d6d6d6"/><stop offset="1" stop-color="#868686"/></linearGradient>
<linearGradient id="fbk" x1="0" y1="0" x2="0" y2="1"><stop offset="0" stop-color="#dd66ee"/><stop offset="1" stop-color="#b648d6"/></linearGradient>
<linearGradient id="fbw" x1="0" y1="0" x2="0" y2="1"><stop offset="0" stop-color="#ffffff"/><stop offset="1" stop-color="#ece4f0"/></linearGradient>
<linearGradient id="tr" x1="0" y1="0" x2="1" y2="0"><stop offset="0" stop-color="#f0f0f1"/><stop offset=".15" stop-color="#e2e2e4"/><stop offset=".5" stop-color="#dfdfe1"/><stop offset=".85" stop-color="#e6e6e8"/><stop offset="1" stop-color="#f2f2f3"/></linearGradient>
</defs>
<!-- Contacts -->
<g transform="rotate(-6 606 1124)">
<path d="M626 1104h3.500v9h-3.500z" fill="#f3f3f3"/><path d="M626 1113h4v9h-4z" fill="#7fd0ee"/><path d="M626 1122h4v9h-4z" fill="#8fdc7a"/><path d="M626 1131h4v9h-4z" fill="#f5b83a"/>
<path d="M583.500 1097.500h39c2.500 0 4 1.500 4 4v46.500c0 2.500-1.500 4-4 4h-39z" fill="url(#ct)"/><path d="M583.500 1152h39c2.500 0 4-1.500 4-4v2c0 2.500-1.500 4-4 4h-39z" fill="#8f6635"/>
<circle cx="605.500" cy="1124" r="12.300" fill="none" stroke="#a87c44" stroke-width="1.200"/><circle cx="605.500" cy="1120.500" r="4.500" fill="#a87c44"/><path d="M596.500 1131.500c1.500-4.500 5-6 9-6s7.500 1.500 9 6c-2.500 3-5.500 4.500-9 4.500s-6.500-1.500-9-4.500z" fill="#a87c44"/></g>
<!-- Calendar -->
<g transform="translate(-1.200 -1.600) rotate(-8 673 1124)">
<rect x="650.500" y="1104" width="46" height="46.500" rx="2" fill="#767d86"/>
<rect x="652" y="1101" width="43" height="45" rx="2" fill="#fafafa"/><path d="M652 1143h43v2c0 1-.8 2-2 2h-39c-1.200 0-2-.8-2-2z" fill="#d9dadc"/>
<path d="M652 1103c0-1.200.8-2 2-2h39c1.200 0 2 .8 2 2v10.500h-43z" fill="#e9474e"/>
<text x="673.500" y="1111.200" font-family="Liberation Sans, sans-serif" font-size="9.500" text-anchor="middle" fill="#fff" letter-spacing="-.2">NOV</text>
<text x="673" y="1141.500" font-family="Liberation Sans, sans-serif" font-size="32.500" text-anchor="middle" fill="#2b2b2b" letter-spacing="-1.200" stroke="#fafafa" stroke-width="1.100">24</text>
</g>
<!-- Reminders -->
<g transform="rotate(-8 742 1124)">
<rect x="721" y="1098.500" width="42.500" height="51.500" rx="4.500" fill="#fbfbfb" stroke="#2a2a2a" stroke-width=".9"/>
<circle cx="728.500" cy="1109.500" r="3.300" fill="#3478f6"/><circle cx="728.500" cy="1119.700" r="3.300" fill="#e8453c"/><circle cx="728.500" cy="1129.900" r="3.300" fill="#f0a030"/><circle cx="728.500" cy="1140.100" r="3.300" fill="#555"/>
<path d="M734.500 1109.500h23M734.500 1119.700h23M734.500 1129.900h23M734.500 1140.100h23" stroke="#c9c9c9" stroke-width=".9"/></g>
<!-- Notes -->
<g transform="rotate(-7 810 1124)">
<rect x="787.500" y="1098.500" width="44.500" height="52" rx="1.500" fill="#fdfdfa" stroke="#d8c46a" stroke-width=".8"/>
<path d="M787.500 1100c0-.8.700-1.500 1.500-1.500h41.500c.8 0 1.500.7 1.500 1.500v7.800h-44.500z" fill="#ffd530"/><path d="M787.500 1106.500h44.500v1.300h-44.500z" fill="#eab820"/>
<path d="M789 1113.500h41.500M789 1118.100h41.500M789 1122.700h41.500M789 1127.300h41.500M789 1131.900h41.500M789 1136.500h41.500M789 1141.100h41.500M789 1145.700h41.500" stroke="#dcdcd6" stroke-width=".9"/></g>
<!-- Music -->
<circle cx="878.100" cy="1124.200" r="27.500" fill="url(#muw)" stroke="#d5d7dc" stroke-width=".6"/><circle cx="878.100" cy="1124.200" r="24.300" fill="none" stroke="#e6e8ec" stroke-width=".8"/>
<path d="M872 1109.500l17.500-3.700v25.700c0 3.500-2.500 6-6 6s-5-2-5-4.300 2-4.500 5.500-4.800c1 0 1.800 0 2.500.3v-14l-11.500 2.400v18.400c0 3.500-2.500 6-6 6s-5-2-5-4.300 2-4.500 5.500-4.800c1 0 1.800 0 2.500.3z" fill="url(#mu)"/>
<!-- Podcasts -->
<circle cx="946" cy="1124.200" r="27.500" fill="url(#pc)"/>
<g fill="none" stroke="#fff" stroke-width="2.500"><path d="M934.300 1135.600a16.700 16.700 0 1 1 23.400 0"/><path d="M938.800 1131.200a10.400 10.400 0 1 1 14.400 0"/></g>
<circle cx="946" cy="1123.400" r="4.300" fill="#f6f0fa"/><path d="M942 1133.400c0-2.200 1.600-3.500 4-3.500s4 1.300 4 3.500l-1 10c-.2 1.700-1.200 2.500-3 2.500s-2.800-.8-3-2.500z" fill="#f6f0fa"/>
<!-- TV -->
<circle cx="1014.100" cy="1124.200" r="27.500" fill="url(#tv)"/>
<path d="M1006.500 1116.200c.9-1.300 2.300-2 3.300-2 .1 1.300-.4 2.500-1.100 3.300-.8.900-2 1.600-3.100 1.500-.2-1.200.4-2.500.9-2.800zm3.300 3.500c.6 0 2.300-.9 4.200-.7 1.400.1 2.800.7 3.700 2.100-2.800 1.700-2.500 5.700.5 6.900-.7 1.800-1.700 3.500-2.800 4.500-.9.800-1.800.9-2.800.5-1.300-.6-2.300-.6-3.600 0-1 .4-1.900.3-2.800-.7-3-3.200-4.500-9.600-1-12.400 1.400-1 3.200-1 4.600-.2z" fill="#fff" transform="translate(1003.500 1124.600) scale(1.120) translate(-1009.500 -1124.600)"/>
<text x="1022.500" y="1132.300" font-family="Liberation Sans, sans-serif" font-size="21" text-anchor="middle" fill="#fff" letter-spacing="-.2" stroke="#fff" stroke-width=".35">tv</text>
<!-- App Store -->
<circle cx="1082.400" cy="1124.200" r="27.500" fill="url(#as)"/>
<g stroke="#f4f8ff" stroke-width="4" stroke-linecap="round" fill="none"><path d="M1085.500 1108l-2.600 4.600M1080.500 1117l-6.800 12M1071.500 1133l-2.300 4"/><path d="M1079.500 1108l13 23M1094 1133.800l1.800 3.200"/><path d="M1065.500 1129h21.500M1093.500 1129h6"/></g>
<!-- System Preferences -->
<rect x="1122.400" y="1099.100" width="55.100" height="51.700" rx="2" fill="url(#sp)" stroke="#5d5d5d" stroke-width=".5"/><path d="M1123 1100h54" stroke="#d4dde2" stroke-width="1" opacity=".8"/>
<circle cx="1149.700" cy="1125.200" r="21.900" fill="#202020"/>
<circle cx="1149.700" cy="1125.200" r="17.700" fill="none" stroke="url(#gear)" stroke-width="3.600" stroke-dasharray="2.050 1.922"/>
<circle cx="1149.700" cy="1125.200" r="14.800" fill="none" stroke="url(#gear)" stroke-width="3"/>
<circle cx="1149.700" cy="1125.200" r="13.400" fill="#5a5858"/>
<g stroke="#bcbab4" stroke-width="3.700"><path d="M1149.700 1125.200l-7.900-11.700M1149.700 1125.200h14M1149.700 1125.200l-6.500 12.400"/></g><circle cx="1149.700" cy="1125.200" r="1.600" fill="#dedcd6"/>
<circle cx="1172" cy="1105.200" r="11.700" fill="#f6343f"/><text x="1171.600" y="1109.400" font-family="Liberation Sans, sans-serif" font-size="11.600" text-anchor="middle" fill="#fff" stroke="#fff" stroke-width=".4">1</text>
<!-- Feedback -->
<circle cx="1218" cy="1125.100" r="27.300" fill="#f7ecfa"/><circle cx="1218" cy="1125.100" r="25.800" fill="url(#fbk)"/>
<path d="M1205.500 1112h25c2 0 3.300 1.300 3.300 3.300v17.500c0 2-1.300 3.300-3.300 3.300h-14l-7.800 5.800v-5.800h-3.200c-2 0-3.300-1.300-3.300-3.300v-17.500c0-2 1.300-3.300 3.300-3.300z" fill="url(#fbw)"/>
<rect x="1216.400" y="1116" width="3.200" height="10.500" rx="1.600" fill="#c04fdc"/><circle cx="1218" cy="1130.500" r="2" fill="#c04fdc"/>
<!-- separators -->
<path d="M1268.500 1097.500v59.500M1570.500 1097.500v59.500" stroke="#a0a0a0" stroke-width="1"/>
<!-- Word -->
<rect x="1291.500" y="1099.100" width="50.900" height="51.500" rx="11.500" fill="#fff"/>
<path d="M1305.300 1109.400c0-.9.600-1.500 1.500-1.500h25.300c.9 0 1.500.6 1.500 1.500v7h-28.300z" fill="#41a5ee"/><rect x="1305.300" y="1116.300" width="28.300" height="8.500" fill="#2b7cd3"/><rect x="1305.300" y="1124.700" width="28.300" height="8.500" fill="#185abd"/><path d="M1305.300 1133.100h28.300v6.900c0 .9-.6 1.500-1.500 1.500h-25.300c-.9 0-1.500-.6-1.500-1.500z" fill="#103f91"/>
<rect x="1296.700" y="1115.900" width="18.700" height="18.900" rx="1.600" fill="#000" opacity=".18"/><rect x="1295.700" y="1114.900" width="18.700" height="18.900" rx="1.600" fill="#185abd"/>
<text x="1305" y="1129.300" font-family="Liberation Sans, sans-serif" font-size="13.500" font-weight="bold" text-anchor="middle" fill="#fff">W</text>
<!-- Excel -->
<rect x="1359.500" y="1099.100" width="50.900" height="51.500" rx="11.500" fill="#fff"/>
<path d="M1373.300 1109.400c0-.9.600-1.500 1.500-1.500h12.700v8.400h-14.200z" fill="#21a366"/><path d="M1387.500 1107.900h12.600c.9 0 1.500.6 1.500 1.500v6.900h-14.100z" fill="#33c481"/><rect x="1373.300" y="1116.300" width="14.200" height="8.500" fill="#107c41"/><rect x="1387.500" y="1116.300" width="14.100" height="8.500" fill="#21a366"/><rect x="1373.300" y="1124.700" width="28.300" height="8.500" fill="#185c37"/><rect x="1387.500" y="1124.700" width="14.100" height="8.500" fill="#107c41"/><path d="M1373.300 1133.100h28.300v6.900c0 .9-.6 1.500-1.500 1.500h-25.300c-.9 0-1.500-.6-1.500-1.500z" fill="#185c37"/>
<rect x="1364.700" y="1115.900" width="18.700" height="18.900" rx="1.600" fill="#000" opacity=".18"/><rect x="1363.700" y="1114.900" width="18.700" height="18.900" rx="1.600" fill="#107c41"/>
<text x="1373" y="1129.300" font-family="Liberation Sans, sans-serif" font-size="13.500" font-weight="bold" text-anchor="middle" fill="#fff">X</text>
<!-- PowerPoint -->
<rect x="1427.500" y="1099.100" width="50.900" height="51.500" rx="11.500" fill="#fff"/>
<circle cx="1453.800" cy="1124.700" r="17" fill="#ed6c47"/><path d="M1453.800 1107.700a17 17 0 0 1 17 17h-17z" fill="#ff8f6b"/><path d="M1436.800 1124.700h34a17 17 0 0 1-34 0z" fill="#d35230"/><path d="M1453.800 1124.700h17a17 17 0 0 1-17 17z" fill="#e25a3a" opacity=".6"/>
<rect x="1432.700" y="1115.900" width="18.700" height="18.900" rx="1.600" fill="#000" opacity=".18"/><rect x="1431.700" y="1114.900" width="18.700" height="18.900" rx="1.600" fill="#c43e1c"/>
<text x="1441" y="1129.300" font-family="Liberation Sans, sans-serif" font-size="13.500" font-weight="bold" text-anchor="middle" fill="#fff">P</text>
<!-- Outlook -->
<rect x="1495.500" y="1099.100" width="50.900" height="51.500" rx="11.500" fill="#fff"/>
<path d="M1510 1109.400c0-.9.600-1.500 1.500-1.500h24c.9 0 1.500.6 1.500 1.500v15h-27z" fill="#0a63c9"/><rect x="1510" y="1112" width="9" height="8.500" fill="#0f78d4"/><rect x="1519" y="1112" width="9" height="8.500" fill="#28a8ea"/><rect x="1528" y="1112" width="9" height="8.500" fill="#50d9ff"/><rect x="1510" y="1120.500" width="9" height="8.500" fill="#0a63c9"/><rect x="1519" y="1120.500" width="9" height="8.500" fill="#0f78d4"/><rect x="1528" y="1120.500" width="9" height="8.500" fill="#28a8ea"/>
<rect x="1510" y="1124" width="27" height="16" fill="#1490df"/><path d="M1509 1128l14.500 7 14.500-8.500v13.500c0 .9-.6 1.500-1.500 1.500h-26c-.9 0-1.500-.6-1.500-1.500z" fill="#1490df"/><path d="M1509 1128l29 13.400c-.3.100-.6.100-1 .1h-26.500c-.9 0-1.500-.6-1.500-1.500z" fill="#28a8ea"/><path d="M1538 1126.500l-1.500-1" stroke="#123b6d" stroke-width="1.500"/>
<rect x="1500.700" y="1115.900" width="18.700" height="18.900" rx="1.600" fill="#000" opacity=".18"/><rect x="1499.700" y="1114.900" width="18.700" height="18.900" rx="1.600" fill="#0f6cbd"/>
<text x="1509" y="1129.300" font-family="Liberation Sans, sans-serif" font-size="13.500" font-weight="bold" text-anchor="middle" fill="#fff">O</text>
<!-- Installer -->
<path d="M1600.100 1127L1616.800 1131.800L1616.800 1153.400L1600.100 1141.400Z" fill="#ae6c36"/><path d="M1616.800 1131.800L1639.800 1127L1639.800 1143.100L1616.800 1153.400Z" fill="#ba7840"/>
<path d="M1595.200 1118.700L1602 1106.800L1619.100 1100L1616 1112Z" fill="#e3b884"/><path d="M1630.500 1102.800L1646.100 1114.700L1639.800 1122.100L1620 1110Z" fill="#dfb07a"/>
<g opacity=".93"><path d="M1600.600 1109L1616.800 1119.300L1615.700 1130.100L1600.300 1119.300Z" fill="#f8e132"/><path d="M1616.800 1119.300L1638.700 1109L1639.500 1121.500L1615.700 1130.100Z" fill="#f3d81f"/><path d="M1600.600 1109L1620.200 1100L1638.700 1109L1616.800 1119.300Z" fill="#fceb58"/><path d="M1611.100 1114.700L1621.400 1111.900L1630.500 1115.900L1616.800 1119.300Z" fill="#e2c82f"/></g>
<path d="M1591.300 1123L1602 1118.700L1616 1131.200L1606 1136Z" fill="#d9a772"/><path d="M1616 1131.200L1639.500 1122.700L1645.200 1130.600L1624.200 1140.900Z" fill="#cf9b66"/>
<!-- Trash -->
<path d="M1665.500 1102C1665.500 1097.500 1676 1096 1688 1096S1710 1097.500 1710 1102L1705.200 1148.500C1705 1152 1697 1153.600 1688.300 1153.600S1671.700 1152 1671.400 1148.500Z" fill="url(#tr)"/>
<path d="M1669 1103l4-4 5 1 3-4 6 1 4-4 5 3 6 2 4 4-4 3h-28z" fill="#ececee"/>
<path d="M1674 1104l5-5 5 6zM1687 1104l3-7 6 3 4 4zM1669.500 1102l3-2 2 2.500z" fill="#2f313a"/><path d="M1679 1100l6-2 2 4-4 1z" fill="#5cc4b5"/><path d="M1690 1098l5 1-1 3-4 1z" fill="#5a3f5a"/><path d="M1696 1101l4-1 3 3-4 1z" fill="#8d9096"/><path d="M1685 1103l2-7 3 1-2 7z" fill="#f7f7f7"/>
<path d="M1681 1116c5 2 13 1 19-4" stroke="#f4f4f5" stroke-width="2.500" fill="none" opacity=".7"/>
</svg>

</body></html>
